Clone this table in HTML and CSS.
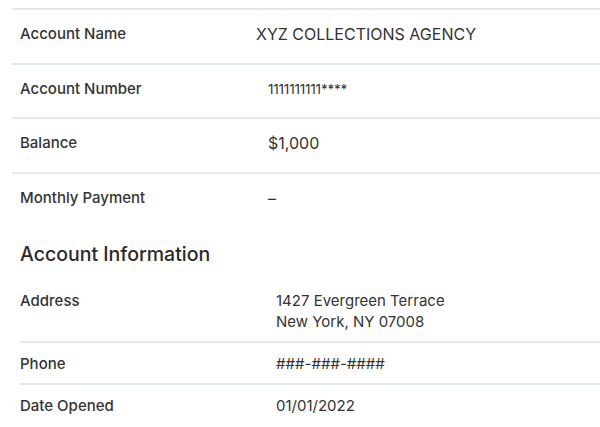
FILE: index.html
```html
<!DOCTYPE html>
<html lang="en">
<head>
    <meta charset="UTF-8">
    <meta name="viewport" content="width=device-width, initial-scale=1.0">
    <title>Account Details</title>
    <link rel="stylesheet" href="styles.css">
</head>
<body>
    <div class="summary">
        <div class="row">
            <div class="label">Account Name</div>
            <div class="value name">XYZ COLLECTIONS AGENCY</div>
        </div>
        <div class="row">
            <div class="label">Account Number</div>
            <div class="value number">1111111111****</div>
        </div>
        <div class="row">
            <div class="label">Balance</div>
            <div class="value">$1,000</div>
        </div>
        <div class="row">
            <div class="label">Monthly Payment</div>
            <div class="value">–</div>
        </div>
    </div>

    <div class="info">
        <h2>Account Information</h2>
        <div class="info-row">
            <div class="label">Address</div>
            <div class="value">1427 Evergreen Terrace<br>New York, NY 07008</div>
        </div>
        <div class="info-row">
            <div class="label">Phone</div>
            <div class="value">###-###-####</div>
        </div>
        <div class="info-row">
            <div class="label">Date Opened</div>
            <div class="value">01/01/2022</div>
        </div>
    </div>
</body>
</html>
```

FILE: styles.css
```css
body {
    font-family: Inter, "Noto Sans", sans-serif;
    margin: 0;
    padding-top: 8px;
    color: #333;
    background: #fff;
}
.summary {
    margin-left: 12px;
}
.row {
    display: grid;
    grid-template-columns: 236px 1fr;
    border-top: 2px solid #e3e8ec;
    padding: 13px 0 17.5px 8px;
    line-height: 22px;
}
.label {
    font-size: 15px;
    font-weight: 500;
    color: #333;
}
.value {
    font-size: 16px;
    color: #333;
    padding-left: 12px;
}
.value.name {
    padding-left: 0;
}
.value.number {
    font-size: 13.5px;
    letter-spacing: -0.2px;
}
.info {
    margin-left: 20px;
}
.info h2 {
    font-size: 19.5px;
    font-weight: 500;
    margin: 16px 0 14px;
    color: #2a2a2a;
}
.info-row {
    display: grid;
    grid-template-columns: 256px 1fr;
    padding: 9.5px 0;
    line-height: 21px;
}
.info-row + .info-row {
    border-top: 2px solid #e3e8ec;
}
.info-row .value {
    padding-left: 0;
    font-size: 15px;
}
```
